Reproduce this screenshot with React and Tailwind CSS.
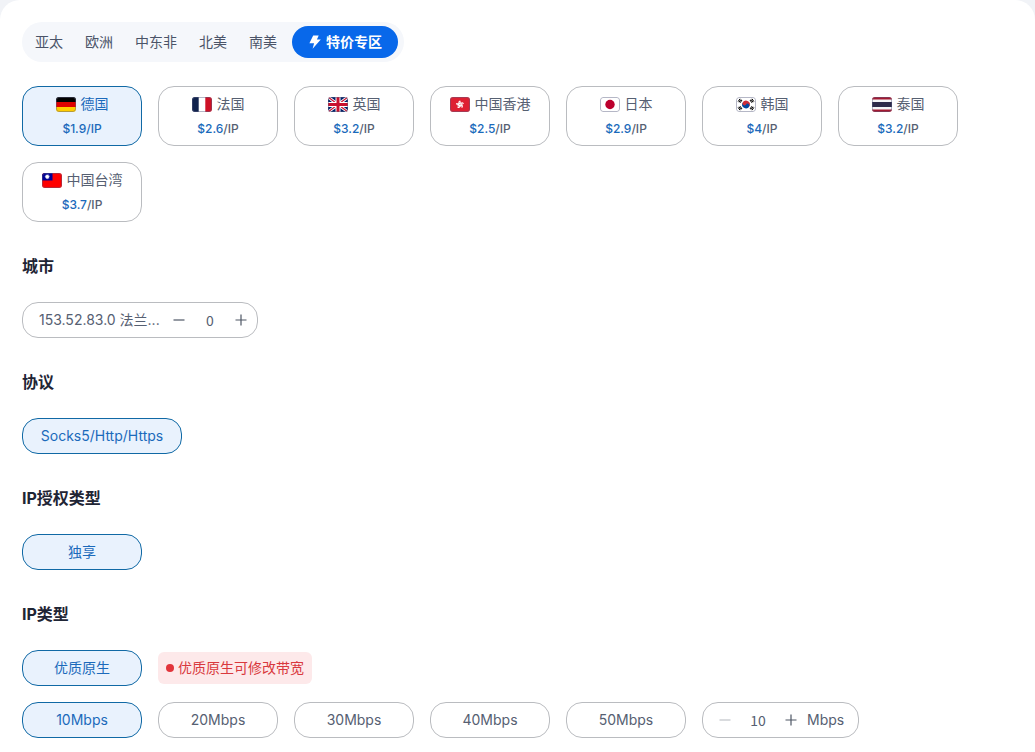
import React, { useState } from "react";

const star = (cx, cy, r, inner, n = 5, rot = -90) =>
  Array.from({ length: n * 2 }, (_, i) => {
    const rad = i % 2 ? inner : r;
    const a = ((rot + (i * 180) / n) * Math.PI) / 180;
    return `${cx + rad * Math.cos(a)},${cy + rad * Math.sin(a)}`;
  }).join(" ");

const flags = {
  de: (
    <>
      <path fill="#000" d="M0 0h20v5H0z" />
      <path fill="#d00" d="M0 5h20v5H0z" />
      <path fill="#fc0" d="M0 10h20v5H0z" />
    </>
  ),
  fr: (
    <>
      <path fill="#fff" d="M0 0h20v15H0z" />
      <path fill="#10224d" d="M0 0h6.7v15H0z" />
      <path fill="#ce1126" d="M13.3 0H20v15h-6.7z" />
    </>
  ),
  gb: (
    <>
      <path fill="#012169" d="M0 0h20v15H0z" />
      <path stroke="#fff" strokeWidth="3" d="M0 0l20 15M20 0L0 15" />
      <path stroke="#c8102e" strokeWidth="1.2" d="M0 0l20 15M20 0L0 15" />
      <path stroke="#fff" strokeWidth="5" d="M10 0v15M0 7.5h20" />
      <path stroke="#c8102e" strokeWidth="3" d="M10 0v15M0 7.5h20" />
    </>
  ),
  hk: (
    <>
      <path fill="#de2032" d="M0 0h20v15H0z" />
      {[0, 72, 144, 216, 288].map((a) => (
        <g key={a} transform={`rotate(${a} 10 7.5)`}>
          <path fill="#fff" d="M10 7.3C7.8 6.3 7.8 4 10.3 3.4C10 4.2 12 5.2 10 7.3z" />
          <circle cx="9.8" cy="5.2" r="0.4" fill="#de2032" />
        </g>
      ))}
    </>
  ),
  jp: (
    <>
      <path fill="#fff" d="M0 0h20v15H0z" />
      <circle cx="10" cy="7.5" r="4.7" fill="#bc002d" />
    </>
  ),
  kr: (
    <>
      <path fill="#fff" d="M0 0h20v15H0z" />
      <g transform="rotate(33 10 7.5)">
        <path fill="#cd2e3a" d="M6.2 7.5a3.8 3.8 0 0 1 7.6 0z" />
        <path fill="#0047a0" d="M6.2 7.5a3.8 3.8 0 0 0 7.6 0z" />
        <circle cx="8.1" cy="7.5" r="1.9" fill="#cd2e3a" />
        <circle cx="11.9" cy="7.5" r="1.9" fill="#0047a0" />
      </g>
      <g stroke="#000" strokeWidth="1">
        <path d="M2.1 4.6l1.9-2.8M3.1 5.2l1.9-2.8M4.1 5.8l1.9-2.8" />
        <path d="M14 12l1.9-2.8M15 12.6l1.9-2.8M16 13.2l1.9-2.8" />
        <path d="M14 3l1.9 2.8M15 2.4l1.9 2.8M16 1.8l1.9 2.8" />
        <path d="M2.1 10.4l1.9 2.8M3.1 9.8l1.9 2.8M4.1 9.2l1.9 2.8" />
      </g>
    </>
  ),
  th: (
    <>
      <path fill="#a51931" d="M0 0h20v15H0z" />
      <path fill="#f4f5f8" d="M0 2.5h20v10H0z" />
      <path fill="#2d2a4a" d="M0 5h20v5H0z" />
    </>
  ),
  tw: (
    <>
      <path fill="#fe0000" d="M0 0h20v15H0z" />
      <path fill="#000095" d="M0 0h10.5v7.5H0z" />
      <polygon fill="#fff" points={star(5.25, 3.75, 2.8, 1.5, 12)} />
    </>
  ),
};

function Flag({ code }) {
  return (
    <svg viewBox="0 0 20 15" className="h-[15px] w-5 shrink-0 rounded-[3px]" fill="none" aria-hidden="true">
      {flags[code]}
      <rect x="0.5" y="0.5" width="19" height="14" rx="2.5" stroke="#5b6080" strokeOpacity="0.45" />
    </svg>
  );
}

const regions = ["亚太", "欧洲", "中东非", "北美", "南美"];

const countries = [
  { code: "de", name: "德国", price: "$1.9" },
  { code: "fr", name: "法国", price: "$2.6" },
  { code: "gb", name: "英国", price: "$3.2" },
  { code: "hk", name: "中国香港", price: "$2.5" },
  { code: "jp", name: "日本", price: "$2.9" },
  { code: "kr", name: "韩国", price: "$4" },
  { code: "th", name: "泰国", price: "$3.2" },
  { code: "tw", name: "中国台湾", price: "$3.7" },
];

const bandwidths = ["10Mbps", "20Mbps", "30Mbps", "40Mbps", "50Mbps"];

const selectedStyle = "border-[#1069a5] bg-[#e9f2fd] text-[#1b6abb]";
const idleStyle = "border-[#babcc0] bg-white text-[#566072]";

function Pill({ selected, wide, children, onClick }) {
  return (
    <button
      type="button"
      aria-pressed={selected}
      onClick={onClick}
      className={`flex h-9 items-center justify-center rounded-2xl border ${wide ? "w-40" : "w-30"} ${
        selected ? selectedStyle : idleStyle
      }`}
    >
      {children}
    </button>
  );
}

function Sign({ plus, disabled, label, onClick }) {
  return (
    <button
      type="button"
      aria-label={label}
      disabled={disabled}
      onClick={onClick}
      className="shrink-0 text-[#4e5665] disabled:text-[#c0c3c8]"
    >
      <svg viewBox="0 0 14 14" className="size-3.5" stroke="currentColor" strokeWidth="1.2" fill="none">
        <path d={plus ? "M1.5 7h11M7 1.5v11" : "M1.5 7h11"} />
      </svg>
    </button>
  );
}

function Section({ title, children }) {
  return (
    <section className="mt-8">
      <h2 className="mb-6 text-base leading-6 font-bold text-[#1f2535]">{title}</h2>
      {children}
    </section>
  );
}

const numberFont = "bg-transparent text-center font-['Noto_Sans_CJK_SC',sans-serif] outline-none";

export default function App() {
  const [country, setCountry] = useState("de");
  const [bandwidth, setBandwidth] = useState("10Mbps");
  const [count, setCount] = useState(0);
  const [custom, setCustom] = useState(10);

  return (
    <div className="min-h-screen bg-[#f1f3f7] font-[Inter,'Noto_Sans_CJK_SC',sans-serif] text-sm text-[#566072]">
      <main className="min-h-screen rounded-t-[20px] bg-white px-[22px] pt-[22px] pb-3">
        <nav className="flex h-10 w-fit items-center rounded-full bg-[#f5f7fb] pr-1.5 pl-0.5">
          {regions.map((r) => (
            <button key={r} type="button" className="h-8 px-[11px] text-[#4b5468]">
              {r}
            </button>
          ))}
          <button
            type="button"
            className="ml-1 flex h-8 items-center gap-1 rounded-full bg-[#0868ea] px-4 font-bold text-white"
          >
            <svg viewBox="0 0 14 14" className="size-3.5" fill="currentColor" aria-hidden="true">
              <path d="M5.2.4h5.5L8.9 4.5h3.9L4.6 13.8l1.5-5.6H1.4z" />
            </svg>
            特价专区
          </button>
        </nav>

        <div className="mt-6 flex flex-wrap gap-4">
          {countries.map((c) => {
            const active = c.code === country;
            return (
              <button
                key={c.code}
                type="button"
                aria-pressed={active}
                onClick={() => setCountry(c.code)}
                className={`flex h-15 w-30 flex-col items-center rounded-2xl border pt-[5px] ${
                  active ? selectedStyle : idleStyle
                }`}
              >
                <span className="flex h-6 items-center gap-[5px]">
                  <Flag code={c.code} />
                  {c.name}
                </span>
                <span className="text-xs leading-[26px] font-medium">
                  <span className="text-[#1b6abb]">{c.price}</span>/IP
                </span>
              </button>
            );
          })}
        </div>

        <Section title="城市">
          <div className="flex h-9 w-fit items-center rounded-2xl border border-[#babcc0] pr-[9px] pl-4">
            <label htmlFor="city-count" className="mr-3 w-[121px] whitespace-nowrap">
              153.52.83.0 法兰...
            </label>
            <Sign label="减少" onClick={() => setCount(Math.max(0, count - 1))} />
            <input
              id="city-count"
              value={count}
              onChange={(e) => setCount(Number(e.target.value) || 0)}
              className={`w-12 ${numberFont}`}
            />
            <Sign plus label="增加" onClick={() => setCount(count + 1)} />
          </div>
        </Section>

        <Section title="协议">
          <Pill selected wide>
            Socks5/Http/Https
          </Pill>
        </Section>

        <Section title="IP授权类型">
          <Pill selected>独享</Pill>
        </Section>

        <Section title="IP类型">
          <div className="flex items-center gap-4">
            <Pill selected>优质原生</Pill>
            <p className="flex h-8 items-center gap-1 rounded-md bg-[#fde9ea] px-2 text-[#d9393e]">
              <span className="size-2 rounded-full bg-[#e2353b]" />
              优质原生可修改带宽
            </p>
          </div>
          <div className="mt-4 flex flex-wrap gap-4">
            {bandwidths.map((b) => (
              <Pill key={b} selected={b === bandwidth} onClick={() => setBandwidth(b)}>
                {b}
              </Pill>
            ))}
            <div className="flex h-9 items-center rounded-2xl border border-[#babcc0] pr-3.5 pl-[15px]">
              <Sign label="减少带宽" disabled={custom <= 10} onClick={() => setCustom(custom - 1)} />
              <input
                id="custom-bandwidth"
                value={custom}
                onChange={(e) => setCustom(Number(e.target.value) || 10)}
                className={`w-[52px] ${numberFont}`}
              />
              <Sign plus label="增加带宽" onClick={() => setCustom(custom + 1)} />
              <label htmlFor="custom-bandwidth" className="ml-[9px]">
                Mbps
              </label>
            </div>
          </div>
        </Section>
      </main>
    </div>
  );
}
